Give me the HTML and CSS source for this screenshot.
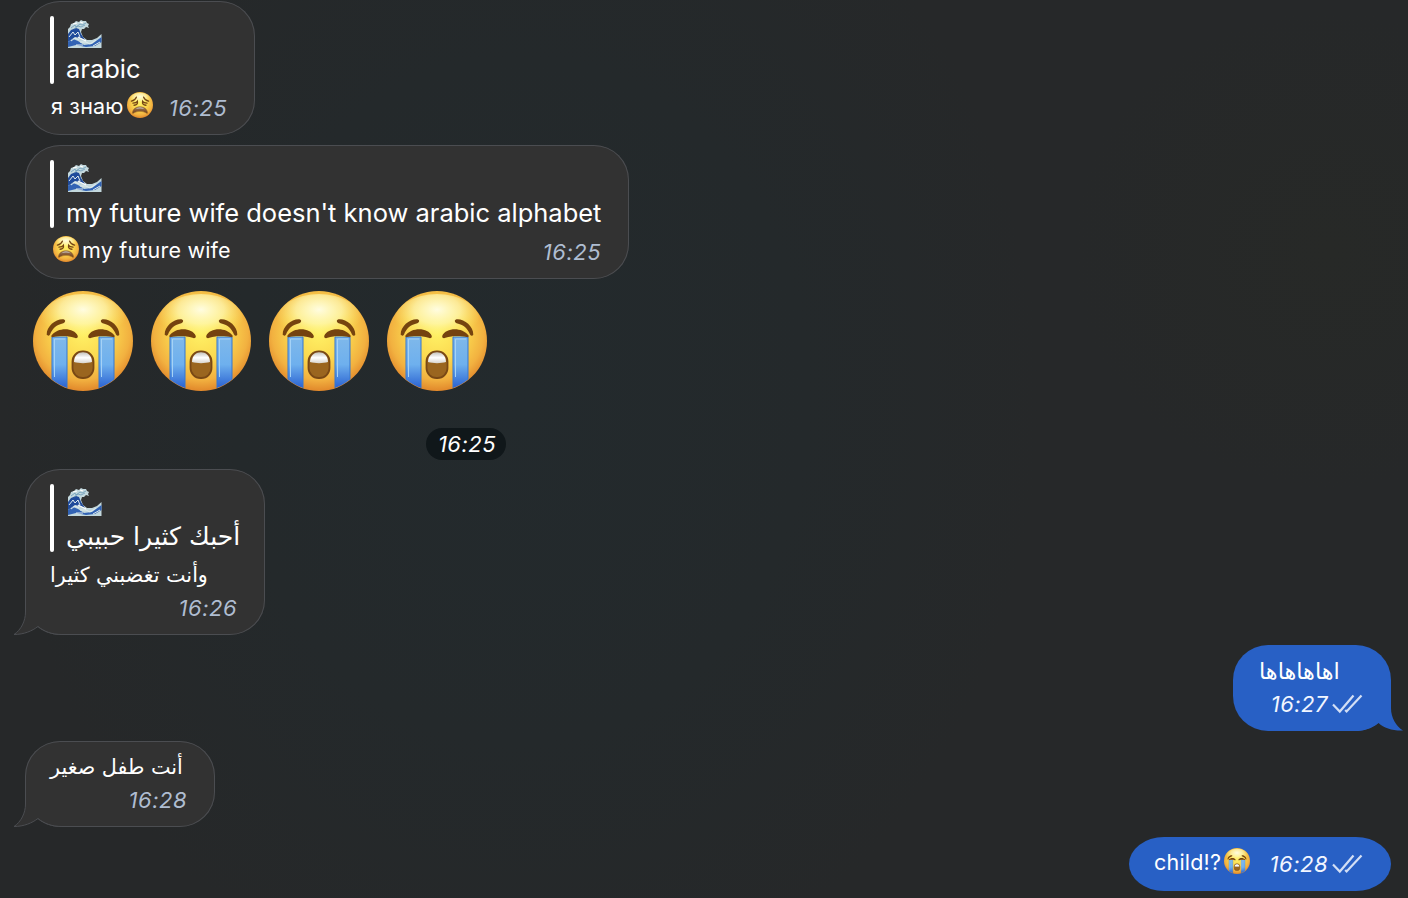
FILE: index.html
```
<!DOCTYPE html>
<html lang="en">
<head>
<meta charset="utf-8">
<title>Chat</title>
<link rel="stylesheet" href="styles.css">
</head>
<body>
<svg class="defs" aria-hidden="true">
  <defs>
    <radialGradient id="face" cx=".5" cy=".42" r=".6">
      <stop offset="0" stop-color="#fff165"/><stop offset=".45" stop-color="#fbd950"/><stop offset=".78" stop-color="#f2b140"/><stop offset="1" stop-color="#de8027"/>
    </radialGradient>
    <radialGradient id="shine" cx=".5" cy=".3" r=".55">
      <stop offset="0" stop-color="#fffee8" stop-opacity=".95"/><stop offset=".5" stop-color="#fffcc0" stop-opacity=".65"/><stop offset="1" stop-color="#fff36a" stop-opacity="0"/>
    </radialGradient>
    <linearGradient id="tear" x1="0" y1="0" x2="0" y2="1">
      <stop offset="0" stop-color="#7fb8ea"/><stop offset=".5" stop-color="#6eb0ee"/><stop offset="1" stop-color="#1f55cc"/>
    </linearGradient>
    <linearGradient id="mouth" x1="0" y1="0" x2="0" y2="1">
      <stop offset="0" stop-color="#9a7658"/><stop offset="1" stop-color="#74421a"/>
    </linearGradient>
    <linearGradient id="teeth" x1="0" y1="0" x2="0" y2="1">
      <stop offset="0" stop-color="#c4c2bd"/><stop offset=".5" stop-color="#fff"/><stop offset="1" stop-color="#d9d6cf"/>
    </linearGradient>
    <clipPath id="disc"><circle cx="50" cy="50" r="49.5"/></clipPath>
    <symbol id="crying" viewBox="0 0 100 100">
      <circle cx="50" cy="50" r="50" fill="url(#face)"/>
      <ellipse cx="50" cy="29" rx="42" ry="26" fill="url(#shine)"/>
      <g clip-path="url(#disc)">
        <path d="M19 46H34V101H19Z" fill="url(#tear)" stroke="#3476d0" stroke-width="1"/>
        <path d="M66 46H81V101H66Z" fill="url(#tear)" stroke="#3476d0" stroke-width="1"/>
        <path d="M21.500 86V48H32M68.500 86V48H79" fill="none" stroke="#a5d2f6" stroke-width="1"/>
      </g>
      <g fill="#75430f">
        <path d="M13.700 43.500C13.500 35 23 27.500 30.500 28.200C33.500 29 32 32 29.500 32.500C23 34 19.500 37.500 17 43.500C16 45.200 14 45 13.700 43.500Z"/>
        <path d="M86.300 43.500C86.500 35 77 27.500 69.500 28.200C66.500 29 68 32 70.500 32.500C77 34 80.500 37.500 83 43.500C84 45.200 86 45 86.300 43.500Z"/>
        <path d="M18.500 44.500C25 36 41 36.500 44.800 45C45 47.300 43 47.500 41.500 46.800C35 44.500 26 44.500 20.500 46C18.500 46.500 17.800 45.500 18.500 44.500Z"/>
        <path d="M81.500 44.500C75 36 59 36.500 55.200 45C55 47.300 57 47.500 58.500 46.800C65 44.500 74 44.500 79.500 46C81.500 46.500 82.200 45.500 81.500 44.500Z"/>
      </g>
      <rect x="39.500" y="60.500" width="21" height="26.500" rx="10" fill="#9a651f" stroke="#794815" stroke-width="1.800"/>
      <path d="M41 71C41 58 59 58 59 71C54 72.500 46 72.500 41 71Z" fill="url(#teeth)"/>
    </symbol>
    <symbol id="weary" viewBox="0 0 100 100">
      <circle cx="50" cy="50" r="50" fill="url(#face)"/>
      <ellipse cx="50" cy="28" rx="42" ry="25" fill="url(#shine)"/>
      <g fill="none" stroke="#754516" stroke-width="5" stroke-linecap="round">
        <path d="M17 35Q31 32 36 20"/><path d="M83 35Q69 32 64 20"/>
        <path d="M23 43Q36 43 40 36Q43 50 27 51"/><path d="M77 43Q64 43 60 36Q57 50 73 51"/>
      </g>
      <path d="M21 80C23 49 77 49 79 80C79 84 75 82 71 79C60 73 40 73 29 79C25 82 21 84 21 80Z" fill="url(#mouth)" stroke="#96631d" stroke-width="2"/>
      <path d="M32 66Q50 51 68 66Q50 60 32 66Z" fill="#c0b7b0"/>
    </symbol>
    <symbol id="wave" viewBox="0 0 34 28">
      <path d="M0 28V9L2 7L3 4L6 3L8 1L11 2L13 0L15 1L18 1L19 3L21 4L20 6L21 8L18 7L16 9L14 9L13 12L15 17L19 20L24 20L29 18L33.500 14V28Z" fill="#c3d8dd"/>
      <path d="M0 14L3 10L8 8L11 9L13 14L17 20L12 18L7 17L0 22Z" fill="#204b9b"/>
      <path d="M0 22L5 19L10 21L16 25L24 24L33.500 17V22L27 26L18 27L8 25L0 27Z" fill="#3263b4"/>
      <path d="M1 17L5 12L7 15L10 12L12 17M3 21L7 18L11 20M12 22L18 22L22 24L28 20M8 25L15 25M25 26L32 22" fill="none" stroke="#dfebee" stroke-width="1"/>
      <path d="M3 8L7 5L8 7L12 4L14 5L18 3M6 9L10 6L13 7L17 5" fill="none" stroke="#6999b8" stroke-width=".8"/>
      <path d="M5 4L9 3M12 2L15 3M10 17L14 19L18 21" fill="none" stroke="#fff" stroke-width="1.200"/>
    </symbol>
    <symbol id="checks" viewBox="0 0 32 22">
      <path d="M2 11.500L8.800 18.500L22.500 2.500M14.200 17L15.600 18.500L30.500 2.500" fill="none" stroke="#d3dff5" stroke-width="2.200"/>
    </symbol>
    <symbol id="tail-in" viewBox="0 0 52 42">
      <path d="M13.500 0V16C13.500 25 9 34 2 38.500C12 38.500 20 35 26 30.500C32 35.500 40 38.500 50 38.500V0Z" fill="#323232"/>
      <path d="M13.500 0V16C13.500 25 9 34 2 38.500C12 38.500 20 35 26 30.500C32 35.500 40 38.500 50 38.500" fill="none" stroke="#4b4d51"/>
    </symbol>
    <symbol id="tail-out" viewBox="0 0 52 42">
      <path d="M38 0V16C38 26 43 34 50 38.500C40 39 31 36 25.500 31C19 36.500 11 39 2 39V0Z" fill="#2860c5"/>
    </symbol>
  </defs>
</svg>
<main class="chat">
  <article class="bubble in b1">
    <div class="quote"><i class="bar"></i><div class="quoted"><svg class="wave"><use href="#wave"/></svg><p>arabic</p></div></div>
    <div class="line"><span class="msg cyr">я знаю</span><svg class="emoji"><use href="#weary"/></svg><time>16:25</time></div>
  </article>
  <article class="bubble in b2">
    <div class="quote"><i class="bar"></i><div class="quoted"><svg class="wave"><use href="#wave"/></svg><p>my future wife doesn't know arabic alphabet</p></div></div>
    <div class="line"><svg class="emoji first"><use href="#weary"/></svg><span class="msg">my future wife</span><time>16:25</time></div>
  </article>
  <section class="stickers">
    <div class="faces"><svg><use href="#crying"/></svg><svg><use href="#crying"/></svg><svg><use href="#crying"/></svg><svg><use href="#crying"/></svg></div>
    <time class="pill">16:25</time>
  </section>
  <article class="bubble in b3">
    <svg class="tail"><use href="#tail-in"/></svg>
    <div class="quote"><i class="bar"></i><div class="quoted"><svg class="wave"><use href="#wave"/></svg><p class="ar" dir="rtl">أحبك كثيرا حبيبي</p></div></div>
    <div class="line"><span class="msg ar" dir="rtl">وأنت تغضبني كثيرا</span></div>
    <div class="meta"><time>16:26</time></div>
  </article>
  <article class="bubble out b4">
    <svg class="tail"><use href="#tail-out"/></svg>
    <div class="line"><span class="msg ar" dir="rtl">اهاهاهاها</span></div>
    <div class="meta"><time>16:27</time><svg class="checks"><use href="#checks"/></svg></div>
  </article>
  <article class="bubble in b5">
    <svg class="tail"><use href="#tail-in"/></svg>
    <div class="line"><span class="msg ar" dir="rtl">أنت طفل صغير</span></div>
    <div class="meta"><time>16:28</time></div>
  </article>
  <article class="bubble out b6">
    <div class="line"><span class="msg child">child!?</span><svg class="emoji"><use href="#crying"/></svg><time>16:28</time><svg class="checks"><use href="#checks"/></svg></div>
  </article>
</main>
</body>
</html>
```
FILE: styles.css
```
* { box-sizing: border-box; }
body {
  margin: 0;
  height: 898px;
  overflow: hidden;
  color: #fff;
  font-family: Inter, "Noto Sans", sans-serif;
  background:
    radial-gradient(ellipse 260px 240px at 1330px 250px, #272927 0%, rgba(39, 41, 39, 0) 100%),
    radial-gradient(ellipse 520px 620px at 520px 400px, #232a2d 0%, #24292b 55%, #262829 100%);
}
.defs { position: absolute; width: 0; height: 0; }
svg { display: block; flex: none; }
p { margin: 0; }
.chat {
  display: flex;
  flex-direction: column;
  align-items: flex-start;
  gap: 10px;
  padding: 1px 17px 0 25px;
}
.bubble {
  position: relative;
  display: flex;
  flex-direction: column;
  border-radius: 35px;
  padding: 7px 28px 0 25px;
  flex: none;
}
.in { background: #323232; box-shadow: inset 0 0 0 1px #4b4d51; }
.out { background: #2860c5; align-self: flex-end; }
.b1 { width: 230px; height: 134px; padding-top: 15px; }
.b2 { width: 604px; height: 134px; padding-top: 15px; }
.b3 { width: 240px; height: 166px; padding-top: 15px; }
.b4 { width: 158px; height: 86px; }
.b5 { width: 190px; height: 86px; }
.b6 { width: 262px; height: 54px; border-radius: 35px / 27px; }
.quote { display: flex; gap: 13px; height: 72px; }
.bar { width: 4px; height: 68px; border-radius: 2px; background: #fff; flex: none; }
.quoted { padding-top: 4px; }
.quoted p { font-size: 25.5px; line-height: 32px; letter-spacing: -.01px; white-space: nowrap; margin: 5px 0 0 -1px; }
.quoted .ar { font-size: 25.1px; letter-spacing: 0; }
.wave { width: 34px; height: 28px; margin-left: .5px; }
.line { display: flex; height: 36px; align-items: flex-start; }
.msg { font-size: 21.5px; line-height: 36px; letter-spacing: .2px; white-space: nowrap; }
.cyr { margin-left: 1px; }
.emoji { width: 26px; height: 26px; margin: 4px 0 0 3px; }
.first { margin: 4px 3px 0 3px; }
time { font-size: 22px; font-style: italic; line-height: 36px; letter-spacing: .5px; color: #afbdd1; }
.line time { margin: 2px 0 0 auto; }
.line, .meta { position: relative; }
.meta { display: flex; justify-content: flex-end; align-items: flex-start; margin-top: -2px; }
.out time { color: #f2f6ff; }
.checks { width: 32px; height: 22px; margin: 7px 0 0 3px; }
.line .checks { margin-top: 9px; }
.msg.ar { font-family: "DejaVu Sans", sans-serif; font-size: 20.7px; letter-spacing: 0; padding-top: 1px; }
.quoted .ar { font-family: "DejaVu Sans", sans-serif; }
.b4 .msg.ar { font-size: 22.4px; margin-left: 1px; }
.tail { position: absolute; width: 52px; height: 42px; bottom: -3px; }
.in .tail { left: -13px; }
.out .tail { right: -14px; }
.stickers { height: 170px; padding: 2px 0 0 8px; width: 481px; display: flex; flex-direction: column; }
.faces { display: flex; gap: 18px; }
.faces svg { width: 100px; height: 100px; }
.pill {
  align-self: flex-end;
  width: 80px;
  height: 32px;
  margin-top: 37px;
  padding-left: 2px;
  line-height: 32px;
  text-align: center;
  border-radius: 16px;
  background: #10171a;
  color: #fff;
}
```
